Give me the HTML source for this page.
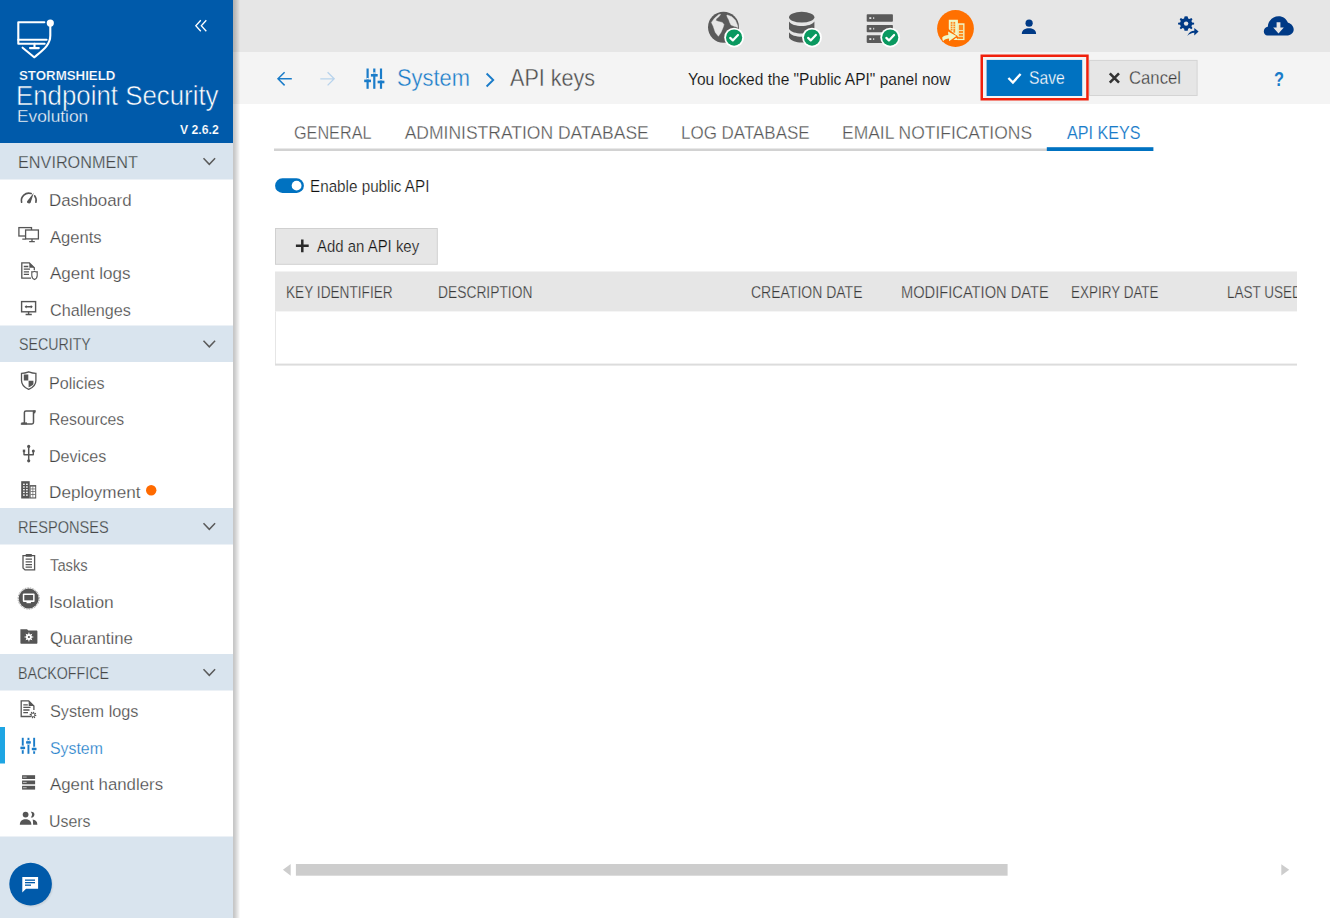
<!DOCTYPE html>
<html><head><meta charset="utf-8"><title>API keys</title>
<style>
html,body{margin:0;padding:0;background:#fff;}
#root{position:relative;width:1330px;height:918px;overflow:hidden;font-family:"Liberation Sans",sans-serif;}
.ov{position:absolute;left:0;top:0;}
.t{position:absolute;white-space:nowrap;line-height:1;transform-origin:0 0;}
</style></head><body><div id="root">
<svg class="ov" width="1330" height="918" viewBox="0 0 1330 918">
<defs>
<linearGradient id="shd" x1="0" x2="1" y1="0" y2="0">
<stop offset="0" stop-color="#000" stop-opacity="0.23"/>
<stop offset="0.25" stop-color="#000" stop-opacity="0.2"/>
<stop offset="0.85" stop-color="#000" stop-opacity="0.05"/>
<stop offset="1" stop-color="#000" stop-opacity="0"/>
</linearGradient>
<radialGradient id="cshd" cx="0.5" cy="0.5" r="0.5">
<stop offset="0.7" stop-color="#000" stop-opacity="0.22"/>
<stop offset="1" stop-color="#000" stop-opacity="0"/>
</radialGradient>
</defs>
<rect x="0" y="0" width="1330" height="918" fill="#ffffff"/>
<rect x="233" y="0" width="1097" height="52" fill="#e6e6e6"/>
<rect x="233" y="52" width="1097" height="52" fill="#f4f4f4"/>
<rect x="0" y="0" width="233" height="143" fill="#005aaa"/>
<rect x="0" y="143" width="233" height="36.5" fill="#d9e4ee"/>
<rect x="0" y="325.5" width="233" height="36.5" fill="#d9e4ee"/>
<rect x="0" y="508" width="233" height="36.5" fill="#d9e4ee"/>
<rect x="0" y="654" width="233" height="36.5" fill="#d9e4ee"/>
<rect x="0" y="836.5" width="233" height="81.5" fill="#d9e4ee"/>
<rect x="233" y="0" width="7" height="918" fill="url(#shd)"/>
<rect x="0" y="727" width="5" height="36.5" fill="#1ea5e3"/>
<!-- logo -->
<g fill="none" stroke="#fff" stroke-width="2.1" stroke-linecap="round" stroke-linejoin="round">
<path d="M44.3 22.3H18.3V43.8H44.6"/>
<path d="M18.3 39.7H46.6"/>
<path d="M34.5 43.8V48.1M30 48.1H38.8"/>
<path d="M22.6 47.7L34.2 57.3C43 50 50.3 45 50.3 35.5V24"/>
</g>
<circle cx="50.3" cy="23.1" r="3.6" fill="#fff"/>
<!-- collapse chevrons -->
<g fill="none" stroke="#fff" stroke-width="1.3">
<path d="M200.8 20.2L195.8 25.7L200.8 31.2M206.3 20.2L201.3 25.7L206.3 31.2"/>
</g>
<!-- section chevrons -->
<g fill="none" stroke="#5a5a5a" stroke-width="1.5">
<path d="M203.5 158.3L209.3 164.3L215.1 158.3"/>
<path d="M203.5 340.8L209.3 346.8L215.1 340.8"/>
<path d="M203.5 523.3L209.3 529.3L215.1 523.3"/>
<path d="M203.5 669.3L209.3 675.3L215.1 669.3"/>
</g>
<!-- Dashboard gauge -->
<g fill="none" stroke="#555" stroke-width="1.6" stroke-linecap="round">
<path d="M21.6 202.3A7.4 7.4 0 0 1 31.2 193.6"/>
<path d="M34.6 195.8A7.4 7.4 0 0 1 35.9 202.3"/>
</g>
<path d="M27.1 201.2L33.8 192.7L30.6 202.8C30 203.6 28.6 203.6 27.6 203C27 202.6 26.9 201.8 27.1 201.2Z" fill="#555"/>
<!-- Agents monitors -->
<g fill="none" stroke="#555" stroke-width="1.3">
<rect x="18.9" y="227.6" width="12.6" height="8.4"/>
<rect x="25.6" y="230" width="12.8" height="8.9" fill="#fff"/>
<path d="M32 239V241.5M29.2 241.7H34.8M22.3 239.1H25.6"/>
</g>
<!-- Agent logs -->
<g fill="none" stroke="#555" stroke-width="1.3">
<path d="M31 278.2H21.8V262.8H29.3L34.3 267.8V270"/>
<path d="M23.8 266.5H28.3M23.8 269.2H30M23.8 271.8H29M23.8 274.4H29"/>
<path d="M34.5 271.3C33.5 272 32.5 272 31.8 271.8V275.5C31.8 277.5 33.3 279 34.5 279.6C35.7 279 37.2 277.5 37.2 275.5V271.8C36.5 272 35.5 272 34.5 271.3Z" stroke-width="1.1"/>
</g>
<path d="M29.3 262.8V267.8H34.3Z" fill="#555"/>
<!-- Challenges -->
<g fill="none" stroke="#555" stroke-width="1.4">
<rect x="21.6" y="301.6" width="14" height="10.2"/>
<path d="M28.6 311.8V314.3M25.6 314.5H31.8M25.6 306.7H31.8"/>
</g>
<path d="M24.6 306.7L26.6 305V308.4ZM32.8 306.7L30.8 305V308.4Z" fill="#555"/>
<!-- Policies shield -->
<path d="M28.7 371.8C26 372.8 23.7 373.3 21.5 373.3V380.5C21.5 385 25 387.8 28.7 389.3C32.4 387.8 35.9 385 35.9 380.5V373.3C33.7 373.3 31.4 372.8 28.7 371.8Z" fill="none" stroke="#555" stroke-width="1.3"/>
<path d="M23.8 374.4H28.3V380.6H23.8ZM28.6 380.8H33.4V384.2C32.2 385.6 30.4 386.6 28.6 387.3Z" fill="#555"/>
<!-- Resources scroll -->
<g fill="none" stroke="#555" stroke-width="1.5" stroke-linejoin="round">
<path d="M24.4 423.3V412.6C24.4 411.6 25 411 26 411H35.4"/>
<path d="M33.5 411.1V422.3C33.5 423.3 32.8 423.9 32 423.9H21.4C22.4 423.9 23.3 423.7 24.4 423.3"/>
</g>
<path d="M33.2 410.6L35.9 410.6L35.2 413.2L33.5 413.6Z" fill="#555"/>
<path d="M21.4 422.4H27V424.4H21.4Z" fill="#555"/>
<!-- Devices USB -->
<g fill="#555">
<circle cx="28.7" cy="446.4" r="1.6"/>
<circle cx="28.7" cy="460.8" r="1.6"/>
<rect x="27.95" y="446.4" width="1.5" height="14.4"/>
<rect x="22.8" y="449.6" width="2.4" height="2.6"/>
<circle cx="33.3" cy="450.9" r="1.5"/>
<path d="M23.3 452V454.6C23.3 455.2 23.6 455.5 24.2 455.5H33.2C33.8 455.5 34 455.2 34 454.6V452H32.6V454.1H24.7V452Z"/>
</g>
<!-- Deployment building -->
<g fill="#555">
<rect x="21.2" y="481.2" width="8.5" height="17.3"/>
<rect x="29.7" y="485.1" width="6.5" height="13.4"/>
</g>
<g fill="#fff">
<rect x="23.1" y="483.6" width="1.6" height="1.4"/><rect x="26.1" y="483.6" width="1.6" height="1.4"/>
<rect x="23.1" y="486.3" width="1.6" height="1.4"/><rect x="26.1" y="486.3" width="1.6" height="1.4"/>
<rect x="23.1" y="489" width="1.6" height="1.4"/><rect x="26.1" y="489" width="1.6" height="1.4"/>
<rect x="23.1" y="491.7" width="1.6" height="1.4"/><rect x="26.1" y="491.7" width="1.6" height="1.4"/>
<rect x="23.1" y="494.4" width="1.6" height="1.4"/><rect x="26.1" y="494.4" width="1.6" height="1.4"/>
<rect x="30.6" y="486.6" width="4.6" height="10.8"/>
</g>
<g fill="#555">
<rect x="30.6" y="488.6" width="4.6" height="0.7"/><rect x="30.6" y="491.3" width="4.6" height="0.7"/><rect x="30.6" y="494" width="4.6" height="0.7"/>
<rect x="32.6" y="486.6" width="0.6" height="10.8"/>
</g>
<circle cx="151.2" cy="490.2" r="5.2" fill="#ff6a00"/>
<!-- Tasks clipboard -->
<g fill="none" stroke="#555" stroke-width="1.3">
<path d="M23 555.7H34.6V569.9H25L23 567.9Z"/>
<path d="M25.6 559.2H32M25.6 561.9H32M25.6 564.6H32M25.6 567.2H32"/>
</g>
<rect x="25.6" y="554" width="6.4" height="2.8" rx="0.8" fill="#555"/>
<!-- Isolation -->
<circle cx="28.7" cy="598.5" r="10" fill="#555"/>
<circle cx="28.7" cy="598.5" r="10.6" fill="none" stroke="#555" stroke-width="1" stroke-dasharray="0.8 0.9" opacity="0.7"/>
<rect x="22.8" y="593.5" width="11.8" height="8.6" rx="1" fill="#fff"/>
<rect x="24.3" y="595" width="8.8" height="5.3" fill="#555"/>
<rect x="26.5" y="602" width="4.4" height="1.2" fill="#fff"/>
<!-- Quarantine folder -->
<path d="M20.4 629.2H27L28.4 630.6H36.4C37 630.6 37.4 631 37.4 631.6V642.8C37.4 643.4 37 643.8 36.4 643.8H21.4C20.8 643.8 20.4 643.4 20.4 642.8Z" fill="#555"/>
<g fill="#fff">
<circle cx="28.9" cy="637" r="3"/>
<path d="M24.5 637H33.3M28.9 632.6V641.4M25.8 633.9L32 640.1M32 633.9L25.8 640.1" stroke="#fff" stroke-width="1"/>
</g>
<circle cx="28.9" cy="637" r="1.1" fill="#555"/>
<!-- System logs -->
<g fill="none" stroke="#555" stroke-width="1.3">
<path d="M30.5 716.5H21.2V700.9H28.7L33.9 706V710"/>
<path d="M23.3 704.8H27.8M23.3 707.4H30.5M23.3 710H29.5M23.3 712.6H28"/>
</g>
<path d="M28.7 700.9V706H33.9Z" fill="#555"/>
<circle cx="33" cy="715" r="2.6" fill="none" stroke="#555" stroke-width="1.5" stroke-dasharray="1.1 0.9"/>
<circle cx="33" cy="715" r="1.9" fill="#fff" stroke="#555" stroke-width="0.9"/>
<!-- System sliders (blue) -->
<g fill="#1a7cc9">
<rect x="21.8" y="737.8" width="1.9" height="16"/>
<rect x="27.5" y="737.8" width="1.9" height="16"/>
<rect x="33.2" y="737.8" width="1.9" height="16"/>
<rect x="20.4" y="746.7" width="4.7" height="2.4"/>
<rect x="26.1" y="741.2" width="4.7" height="2.4"/>
<rect x="31.8" y="747.8" width="4.7" height="2.4"/>
</g>
<g fill="#fff">
<rect x="21.8" y="745.6" width="1.9" height="1.0"/><rect x="21.8" y="749.2" width="1.9" height="1.0"/>
<rect x="27.5" y="740.1" width="1.9" height="1.0"/><rect x="27.5" y="743.7" width="1.9" height="1.0"/>
<rect x="33.2" y="746.7" width="1.9" height="1.0"/><rect x="33.2" y="750.3" width="1.9" height="1.0"/>
</g>
<!-- Agent handlers -->
<g fill="#555">
<rect x="22.1" y="775.2" width="13" height="3.8"/>
<rect x="22.1" y="780.5" width="13" height="3.8"/>
<rect x="22.1" y="785.8" width="13" height="3.8"/>
</g>
<g fill="#fff">
<rect x="23.4" y="776.6" width="1.2" height="1"/><rect x="25.4" y="776.6" width="1" height="1"/>
<rect x="23.4" y="781.9" width="1.2" height="1"/><rect x="25.4" y="781.9" width="1" height="1"/>
<rect x="23.4" y="787.2" width="1.2" height="1"/><rect x="25.4" y="787.2" width="1" height="1"/>
</g>
<!-- Users -->
<g fill="#555">
<circle cx="25.6" cy="814.6" r="2.9"/>
<path d="M30.8 811.8A2.9 2.9 0 1 1 30.8 817.4A4.2 4.2 0 0 0 30.8 811.8Z"/>
<path d="M19.8 824.8C19.8 821 22.6 819.3 25.6 819.3C28.6 819.3 31.4 821 31.4 824.8Z"/>
<path d="M32.6 819.6C35.4 819.9 37.4 821.5 37.4 824.8H33.1C33.1 822.6 33 821 32.6 819.6Z"/>
</g>
<!-- chat button -->
<circle cx="31.6" cy="885.6" r="22.5" fill="url(#cshd)"/>
<circle cx="30.6" cy="884.1" r="21.3" fill="#005aaa"/>
<path d="M22.3 877.1H38.1V888.7H26L22.3 892.5Z" fill="#fff"/>
<g fill="#005aaa"><rect x="25" y="879.5" width="10" height="1.3"/><rect x="25" y="882" width="10" height="1.3"/><rect x="25" y="884.5" width="6" height="1.3"/></g>
<!-- globe -->
<circle cx="723.5" cy="27.3" r="15.5" fill="#5a5a5a"/>
<path d="M718.8 14.5L714.5 18.2L711.4 22.4L713.2 26.3L715.3 32.4L718.4 36.3L721 32.4L723.2 27.2L724 24.6L722.3 22.4L718.4 21.5L715.8 20.6L716.2 18.9L719.3 16.3L720.6 14.3Z" fill="#e6e6e6" stroke="#e6e6e6" stroke-width="0.4" stroke-linejoin="round"/>
<path d="M727.5 15L731.9 16.7L735.4 20.2L737.6 25.4L738 27.6L734.1 26.3L731 25L729.7 22.4L728.8 19.8L727.5 17.6L726.7 15.4Z" fill="#e6e6e6" stroke="#e6e6e6" stroke-width="0.4" stroke-linejoin="round"/>
<!-- database -->
<g fill="#5a5a5a">
<ellipse cx="801.7" cy="17.2" rx="12.7" ry="5.4"/>
<path d="M789 21.5C791 24.5 796 26 801.7 26C807.4 26 812.4 24.5 814.4 21.5V29C812.4 32 807.4 33.5 801.7 33.5C796 33.5 791 32 789 29Z"/>
<path d="M789 32.2C791 35.2 796 36.7 801.7 36.7C807.4 36.7 812.4 35.2 814.4 32.2V37.5C812.4 40.8 807.4 42.6 801.7 42.6C796 42.6 791 40.8 789 37.5Z"/>
</g>
<!-- server -->
<g fill="#5a5a5a">
<rect x="866.7" y="14.3" width="26.2" height="7.5" rx="0.8"/>
<rect x="866.7" y="25" width="26.2" height="7.3" rx="0.8"/>
<rect x="866.7" y="35.3" width="26.2" height="7.6" rx="0.8"/>
</g>
<g fill="#e6e6e6">
<rect x="869.3" y="17.2" width="2" height="1.8"/><rect x="873.2" y="17.2" width="1" height="1.8"/>
<rect x="869.3" y="27.8" width="2" height="1.8"/><rect x="873.2" y="27.8" width="1" height="1.8"/>
<rect x="869.3" y="38.2" width="2" height="1.8"/><rect x="873.2" y="38.2" width="1" height="1.8"/>
</g>
<!-- badges -->
<g>
<circle cx="734.1" cy="37.6" r="9.9" fill="#fff"/><circle cx="734.1" cy="37.6" r="8.1" fill="#0a9960"/>
<circle cx="812" cy="37.6" r="9.9" fill="#fff"/><circle cx="812" cy="37.6" r="8.1" fill="#0a9960"/>
<circle cx="890.2" cy="37.6" r="9.9" fill="#fff"/><circle cx="890.2" cy="37.6" r="8.1" fill="#0a9960"/>
</g>
<g fill="none" stroke="#fff" stroke-width="2.2" stroke-linecap="round" stroke-linejoin="round">
<path d="M730.2 37.9L732.8 40.4L738 35"/>
<path d="M808.1 37.9L810.7 40.4L815.9 35"/>
<path d="M886.3 37.9L888.9 40.4L894.1 35"/>
</g>
<!-- orange deploy -->
<circle cx="955.5" cy="28.5" r="18.4" fill="#ff7000"/>
<g fill="#f0f8c8">
<path d="M948.8 19.7H957.9V40.1H953.4L956.6 37.3L948.8 30.2Z"/>
<rect x="957.6" y="23.3" width="6.9" height="16.8"/>
</g>
<g fill="#ff8a1e">
<rect x="950.7" y="21.9" width="1.8" height="8.6"/>
<rect x="953.4" y="21.9" width="1.8" height="10.8"/>
<rect x="958.8" y="24.8" width="4.4" height="14.2"/>
</g>
<g fill="#f0f8c8">
<rect x="950.5" y="23.8" width="5" height="0.6"/><rect x="950.5" y="26" width="5" height="0.6"/><rect x="950.5" y="28.1" width="5" height="0.6"/>
<rect x="958.8" y="30.1" width="4.4" height="0.8"/><rect x="958.8" y="33.1" width="4.4" height="0.8"/><rect x="958.8" y="35.9" width="4.4" height="0.8"/>
</g>
<path d="M946.5 28.6L958.6 38.6" stroke="#ff7000" stroke-width="1.9"/>
<path d="M942.2 37.6C943.4 36 945.5 35.1 948.3 35L948.1 31.6L956.4 36.1L949.1 41.3L949 38.6C946.6 38.7 944.3 39.6 943.1 41.2C942.6 40.2 942.2 38.9 942.2 37.6Z" fill="#f0f8c8" stroke="#ff7000" stroke-width="1.2" paint-order="stroke"/>
<!-- person -->
<g fill="#003a86">
<circle cx="1029.1" cy="23.2" r="3.6"/>
<path d="M1021.8 33.9C1021.8 30 1025.5 28.3 1029 28.3C1032.5 28.3 1036.1 30 1036.1 33.9Z"/>
</g>
<!-- gear share -->
<g fill="#003a86">
<path d="M1186.1 16.2L1187.7 16.4L1188.1 18.4L1189.6 19.1L1191.3 18L1192.5 19.2L1191.4 20.9L1192.1 22.4L1194.1 22.8V24.4L1192.1 24.8L1191.4 26.3L1192.5 28L1191.3 29.2L1189.6 28.1L1188.1 28.8L1187.7 30.8H1184.5L1184.1 28.8L1182.6 28.1L1180.9 29.2L1179.7 28L1180.8 26.3L1180.1 24.8L1178.1 24.4V22.8L1180.1 22.4L1180.8 20.9L1179.7 19.2L1180.9 18L1182.6 19.1L1184.1 18.4L1184.5 16.4Z"/>
<path d="M1187.3 36C1188.5 32.5 1191.5 30.8 1194.3 30.8V28L1198.6 31.6L1194.3 35.4V32.8C1191.7 32.9 1189.2 34 1187.3 36Z"/>
</g>
<circle cx="1186.1" cy="23.6" r="2.2" fill="#e6e6e6"/>
<!-- cloud download -->
<path d="M1267.5 35.4C1265.3 35.4 1263.8 33.5 1263.8 31.4C1263.8 29 1265.5 27.2 1267.8 26.8C1268 21 1272.5 16.3 1278.5 16.3C1283 16.3 1286.5 19 1288 22.8C1291.2 23.5 1293.7 26.3 1293.7 29.6C1293.7 32.8 1291 35.4 1287.8 35.4Z" fill="#003a86"/>
<path d="M1276.6 22.2H1280.4V27.6H1283.8L1278.5 33.4L1273.2 27.6H1276.6Z" fill="#e6e6e6"/>
<!-- breadcrumb -->
<g fill="none" stroke="#1a7cc9" stroke-width="1.5">
<path d="M291.8 78.8H278.2M284.6 72.2L278 78.8L284.6 85.4"/>
</g>
<g fill="none" stroke="#b8d3ec" stroke-width="1.3">
<path d="M320.3 78.8H334M327.6 72.2L334.2 78.8L327.6 85.4"/>
</g>
<g fill="#1a7cc9">
<rect x="366.5" y="68.5" width="2.2" height="20.3"/>
<rect x="373.2" y="68.5" width="2.2" height="20.3"/>
<rect x="379.9" y="68.5" width="2.2" height="20.3"/>
<rect x="364.2" y="79.6" width="6.8" height="2.6"/>
<rect x="370.9" y="74" width="6.8" height="2.6"/>
<rect x="377.6" y="80.7" width="6.8" height="2.6"/>
</g>
<g fill="#f4f4f4">
<rect x="366.5" y="78" width="2.2" height="1.3"/>
<rect x="373.2" y="72.4" width="2.2" height="1.3"/>
<rect x="379.9" y="79.1" width="2.2" height="1.3"/>
</g>
<path d="M486.6 73.5L493.2 80L486.6 86.5" fill="none" stroke="#1a7cc9" stroke-width="1.9"/>
<!-- Save / Cancel -->
<rect x="981.75" y="55.75" width="105.7" height="43.5" fill="none" stroke="#f0200c" stroke-width="2.5"/>
<rect x="986.6" y="59.9" width="95.6" height="36.1" fill="#0072c1"/>
<path d="M1008.4 78L1012.9 82.5L1020.6 74" fill="none" stroke="#fff" stroke-width="2.4"/>
<rect x="1089.5" y="60.4" width="107.6" height="35.1" fill="#e6e6e6" stroke="#d4d4d4" stroke-width="1"/>
<path d="M1109.8 73.4L1119 82.6M1119 73.4L1109.8 82.6" fill="none" stroke="#333" stroke-width="2.6"/>
<!-- tabs -->
<rect x="274" y="148.5" width="773" height="2.5" fill="#d2d2d2"/>
<rect x="1046.8" y="147.2" width="106.6" height="3.8" fill="#0072c1"/>
<!-- toggle -->
<rect x="275.1" y="178.3" width="28.8" height="14.7" rx="7.35" fill="#0072c1"/>
<circle cx="296.6" cy="185.65" r="4.9" fill="#fff"/>
<!-- add button -->
<rect x="275.5" y="228.5" width="161.8" height="35.8" fill="#e6e6e6" stroke="#d0d0d0" stroke-width="1"/>
<path d="M295.9 245.8H308.7M302.3 239.4V252.2" stroke="#2a2a2a" stroke-width="2.5"/>
<!-- table -->
<rect x="275" y="271.5" width="1022" height="39.9" fill="#e6e6e6"/>
<rect x="275" y="311.4" width="1" height="53" fill="#e6e6e6"/>
<rect x="275" y="363.6" width="1022" height="2" fill="#dcdcdc"/>
<!-- scrollbar -->
<rect x="295.9" y="864" width="711.7" height="11.7" fill="#cdcdcd"/>
<path d="M290.7 864V875.7L282.9 869.85Z" fill="#cdcdcd"/>
<path d="M1281.3 864.2V875.5L1289.2 869.85Z" fill="#cdcdcd"/>
</svg>

<span class="t" style="left:19.10px;top:70.47px;font-size:12.5px;color:#fff;font-weight:700;-webkit-text-stroke:0.2px #005aaa;transform:scaleX(1.0626);">STORMSHIELD</span>
<span class="t" style="left:16.40px;top:82.18px;font-size:27.2px;color:#fff;-webkit-text-stroke:0.55px #005aaa;transform:scaleX(0.9504);">Endpoint Security</span>
<span class="t" style="left:16.87px;top:109.44px;font-size:16.9px;color:#fff;-webkit-text-stroke:0.35px #005aaa;transform:scaleX(1.0251);">Evolution</span>
<span class="t" style="left:180.40px;top:124.00px;font-size:12px;color:#fff;font-weight:700;-webkit-text-stroke:0.15px #005aaa;transform:scaleX(1.0169);">V 2.6.2</span>
<span class="t" style="left:17.60px;top:153.75px;font-size:16.3px;color:#474747;-webkit-text-stroke:0.25px #d9e4ee;transform:scaleX(0.9970);">ENVIRONMENT</span>
<span class="t" style="left:48.96px;top:192.20px;font-size:16.3px;color:#444;-webkit-text-stroke:0.25px #fff;transform:scaleX(1.0374);">Dashboard</span>
<span class="t" style="left:50.00px;top:228.70px;font-size:16.3px;color:#444;-webkit-text-stroke:0.25px #fff;transform:scaleX(1.0188);">Agents</span>
<span class="t" style="left:50.00px;top:265.19px;font-size:16.3px;color:#444;-webkit-text-stroke:0.25px #fff;transform:scaleX(1.0456);">Agent logs</span>
<span class="t" style="left:50.00px;top:301.69px;font-size:16.3px;color:#444;-webkit-text-stroke:0.25px #fff;transform:scaleX(0.9936);">Challenges</span>
<span class="t" style="left:18.60px;top:336.25px;font-size:16.3px;color:#474747;-webkit-text-stroke:0.25px #d9e4ee;transform:scaleX(0.8719);">SECURITY</span>
<span class="t" style="left:49.01px;top:374.69px;font-size:16.3px;color:#444;-webkit-text-stroke:0.25px #fff;transform:scaleX(0.9898);">Policies</span>
<span class="t" style="left:49.03px;top:411.19px;font-size:16.3px;color:#444;-webkit-text-stroke:0.25px #fff;transform:scaleX(0.9664);">Resources</span>
<span class="t" style="left:49.01px;top:447.69px;font-size:16.3px;color:#444;-webkit-text-stroke:0.25px #fff;transform:scaleX(0.9883);">Devices</span>
<span class="t" style="left:48.95px;top:484.19px;font-size:16.3px;color:#444;-webkit-text-stroke:0.25px #fff;transform:scaleX(1.0527);">Deployment</span>
<span class="t" style="left:17.71px;top:518.75px;font-size:16.3px;color:#474747;-webkit-text-stroke:0.25px #d9e4ee;transform:scaleX(0.8947);">RESPONSES</span>
<span class="t" style="left:50.00px;top:557.19px;font-size:16.3px;color:#444;-webkit-text-stroke:0.25px #fff;transform:scaleX(0.9066);">Tasks</span>
<span class="t" style="left:48.93px;top:593.69px;font-size:16.3px;color:#444;-webkit-text-stroke:0.25px #fff;transform:scaleX(1.0685);">Isolation</span>
<span class="t" style="left:50.00px;top:630.19px;font-size:16.3px;color:#444;-webkit-text-stroke:0.25px #fff;transform:scaleX(1.0286);">Quarantine</span>
<span class="t" style="left:17.73px;top:664.75px;font-size:16.3px;color:#474747;-webkit-text-stroke:0.25px #d9e4ee;transform:scaleX(0.8743);">BACKOFFICE</span>
<span class="t" style="left:50.00px;top:703.19px;font-size:16.3px;color:#444;-webkit-text-stroke:0.25px #fff;transform:scaleX(0.9974);">System logs</span>
<span class="t" style="left:50.00px;top:739.69px;font-size:16.3px;color:#1a7cc9;-webkit-text-stroke:0.25px #fff;transform:scaleX(0.9736);">System</span>
<span class="t" style="left:50.00px;top:776.19px;font-size:16.3px;color:#444;-webkit-text-stroke:0.25px #fff;transform:scaleX(1.0321);">Agent handlers</span>
<span class="t" style="left:49.02px;top:812.69px;font-size:16.3px;color:#444;-webkit-text-stroke:0.25px #fff;transform:scaleX(0.9764);">Users</span>
<span class="t" style="left:397.40px;top:65.94px;font-size:24.3px;color:#1a7cc9;-webkit-text-stroke:0.35px #f4f4f4;transform:scaleX(0.9014);">System</span>
<span class="t" style="left:510.00px;top:65.94px;font-size:24.3px;color:#4c4c4c;-webkit-text-stroke:0.35px #f4f4f4;transform:scaleX(0.8880);">API keys</span>
<span class="t" style="left:688.00px;top:70.63px;font-size:16.2px;color:#151515;-webkit-text-stroke:0.1px #f4f4f4;transform:scaleX(0.9590);">You locked the &quot;Public API&quot; panel now</span>
<span class="t" style="left:1029.20px;top:69.19px;font-size:18.6px;color:#fff;-webkit-text-stroke:0.3px #0072c1;transform:scaleX(0.8444);">Save</span>
<span class="t" style="left:1129.10px;top:69.09px;font-size:18.6px;color:#3a3a3a;-webkit-text-stroke:0.3px #e6e6e6;transform:scaleX(0.8987);">Cancel</span>
<span class="t" style="left:1273.80px;top:69.10px;font-size:20px;color:#1a7cc9;font-weight:700;transform:scaleX(0.8167);">?</span>
<span class="t" style="left:293.50px;top:124.53px;font-size:17.5px;color:#555;-webkit-text-stroke:0.28px #fff;transform:scaleX(0.9260);">GENERAL</span>
<span class="t" style="left:404.70px;top:124.53px;font-size:17.5px;color:#555;-webkit-text-stroke:0.28px #fff;">ADMINISTRATION DATABASE</span>
<span class="t" style="left:681.03px;top:124.53px;font-size:17.5px;color:#555;-webkit-text-stroke:0.28px #fff;transform:scaleX(0.9701);">LOG DATABASE</span>
<span class="t" style="left:841.80px;top:124.53px;font-size:17.5px;color:#555;-webkit-text-stroke:0.28px #fff;transform:scaleX(0.9971);">EMAIL NOTIFICATIONS</span>
<span class="t" style="left:1066.50px;top:124.53px;font-size:17.5px;color:#1a7cc9;-webkit-text-stroke:0.12px #fff;transform:scaleX(0.9205);">API KEYS</span>
<span class="t" style="left:310.26px;top:177.63px;font-size:16.2px;color:#111;-webkit-text-stroke:0.22px #fff;transform:scaleX(0.9410);">Enable public API</span>
<span class="t" style="left:317.10px;top:237.93px;font-size:16.2px;color:#111;-webkit-text-stroke:0.22px #e6e6e6;transform:scaleX(0.9228);">Add an API key</span>
<span class="t" style="left:286.14px;top:284.97px;font-size:15.8px;color:#3a3a3a;-webkit-text-stroke:0.25px #e6e6e6;transform:scaleX(0.8639);">KEY IDENTIFIER</span>
<span class="t" style="left:437.73px;top:284.97px;font-size:15.8px;color:#3a3a3a;-webkit-text-stroke:0.25px #e6e6e6;transform:scaleX(0.8747);">DESCRIPTION</span>
<span class="t" style="left:751.10px;top:284.97px;font-size:15.8px;color:#3a3a3a;-webkit-text-stroke:0.25px #e6e6e6;transform:scaleX(0.8862);">CREATION DATE</span>
<span class="t" style="left:901.07px;top:284.97px;font-size:15.8px;color:#3a3a3a;-webkit-text-stroke:0.25px #e6e6e6;transform:scaleX(0.9283);">MODIFICATION DATE</span>
<span class="t" style="left:1071.05px;top:284.97px;font-size:15.8px;color:#3a3a3a;-webkit-text-stroke:0.25px #e6e6e6;transform:scaleX(0.8525);">EXPIRY DATE</span>
<div style="position:absolute;left:0;top:0;width:1297px;height:918px;overflow:hidden"><span class="t" style="left:1227.14px;top:284.97px;font-size:15.8px;color:#3a3a3a;-webkit-text-stroke:0.25px #e6e6e6;transform:scaleX(0.8550);">LAST USED</span></div>
</div></body></html>
